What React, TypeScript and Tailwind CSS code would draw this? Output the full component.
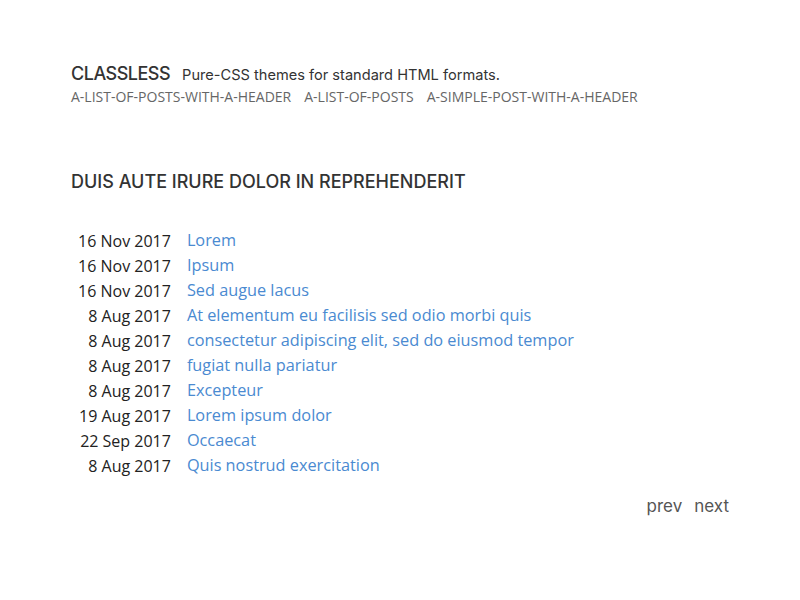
const posts: { date: string; title: string }[] = [
  { date: "16 Nov 2017", title: "Lorem" },
  { date: "16 Nov 2017", title: "Ipsum" },
  { date: "16 Nov 2017", title: "Sed augue lacus" },
  { date: "8 Aug 2017", title: "At elementum eu facilisis sed odio morbi quis" },
  { date: "8 Aug 2017", title: "consectetur adipiscing elit, sed do eiusmod tempor" },
  { date: "8 Aug 2017", title: "fugiat nulla pariatur" },
  { date: "8 Aug 2017", title: "Excepteur" },
  { date: "19 Aug 2017", title: "Lorem ipsum dolor" },
  { date: "22 Sep 2017", title: "Occaecat" },
  { date: "8 Aug 2017", title: "Quis nostrud exercitation" },
];

const headingFont = "font-['Inter',sans-serif]";

export default function App() {
  return (
    <div className="min-h-screen bg-white font-['Open_Sans',sans-serif] text-[#222]">
      <div className="px-[71px] pt-[60px]">
        {/* Header */}
        <header>
          <div className="flex items-baseline gap-3">
            <a className={`${headingFont} text-[18px] font-medium tracking-[-0.5px] text-[#333]`}>
              CLASSLESS
            </a>
            <span className={`${headingFont} text-[14.6px] text-[#333]`}>
              Pure-CSS themes for standard HTML formats.
            </span>
          </div>
          <nav className="flex gap-[13px] text-[14px] leading-[20px] text-[#666]">
            <a>A-LIST-OF-POSTS-WITH-A-HEADER</a>
            <a>A-LIST-OF-POSTS</a>
            <a>A-SIMPLE-POST-WITH-A-HEADER</a>
          </nav>
        </header>

        {/* Title */}
        <h1 className={`${headingFont} mt-[62px] text-[18px] font-medium leading-[26px] text-[#333]`}>
          DUIS AUTE IRURE DOLOR IN REPREHENDERIT
        </h1>

        {/* Posts */}
        <table className="mt-[33px] border-collapse text-[16px]">
          <tbody>
            {posts.map((p, i) => (
              <tr key={i} className="h-[25px]">
                <td className="pl-[7px] pr-2 text-right whitespace-nowrap">{p.date}</td>
                <td className="px-2 text-[16.3px] text-[#4a8ad1]">
                  <a>{p.title}</a>
                </td>
              </tr>
            ))}
          </tbody>
        </table>

        {/* Pagination */}
        <div className={`${headingFont} mt-[16px] flex justify-end gap-3 text-[17px] text-[#555]`}>
          <a>prev</a>
          <a>next</a>
        </div>
      </div>
    </div>
  );
}
